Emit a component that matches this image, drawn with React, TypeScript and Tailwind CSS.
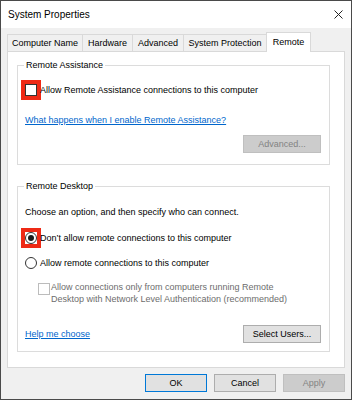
import React from "react";

const Check = ({ red, disabled }: { red?: boolean; disabled?: boolean }) => (
  <span
    className={
      "inline-block w-[12px] h-[12px] shrink-0 bg-white border " +
      (disabled ? "border-[#bcbcbc]" : "border-[#333333]") +
      (red ? " outline-4 outline-[#ee2a16]" : "")
    }
  />
);

const Radio = ({ red, checked }: { red?: boolean; checked?: boolean }) => (
  <span className={"inline-flex w-[12px] h-[12px] shrink-0" + (red ? " outline-4 outline-[#ee2a16]" : "")}>
    <span className="w-[12px] h-[12px] rounded-full border border-[#333333] bg-white flex items-center justify-center">
      {checked && <span className="w-[6px] h-[6px] rounded-full bg-[#1a1a1a]" />}
    </span>
  </span>
);

const Btn = ({ children, w, variant }: { children: React.ReactNode; w: string; variant?: "default" | "disabled" }) => (
  <div
    className={
      "h-[18px] flex items-center justify-center border text-[9px] leading-none " +
      w +
      (variant === "default"
        ? " border-[#0078d7] bg-[#e1e1e1] text-black"
        : variant === "disabled"
        ? " border-[#bfbfbf] bg-[#cccccc] text-[#838383]"
        : " border-[#adadad] bg-[#e1e1e1] text-black")
    }
  >
    {children}
  </div>
);

export default function App() {
  return (
    <div className="w-[352px] h-[400px] bg-[#f0f0f0] border border-[#4a4a4a] flex flex-col font-['Liberation_Sans',Arial,sans-serif] text-black text-[9px] leading-[12px]">
      {/* Title bar */}
      <div className="h-[27px] bg-white flex items-center justify-between pl-[7px] pr-[8px]">
        <span className="text-[10px]">System Properties</span>
        <svg width="9" height="9" viewBox="0 0 9 9" className="mr-[0px]">
          <path d="M0.5 0.5 L8.5 8.5 M8.5 0.5 L0.5 8.5" stroke="#222" strokeWidth="1" />
        </svg>
      </div>

      {/* Tabs */}
      <div className="flex items-end h-[19px] mt-[4px] ml-[6px] relative z-10">
        <div className="w-[76px] h-[17px] border border-b-0 border-[#d9d9d9] flex items-center justify-center">Computer Name</div>
        <div className="w-[51px] h-[17px] -ml-px border border-b-0 border-[#d9d9d9] flex items-center justify-center">Hardware</div>
        <div className="w-[52px] h-[17px] -ml-px border border-b-0 border-[#d9d9d9] flex items-center justify-center">Advanced</div>
        <div className="w-[84px] h-[17px] -ml-px border border-b-0 border-[#d9d9d9] flex items-center justify-center">System Protection</div>
        <div className="w-[45px] h-[20px] -ml-px -mb-px bg-white border border-b-0 border-[#d9d9d9] flex items-center justify-center pb-[1px]">Remote</div>
      </div>

      {/* Panel */}
      <div className="mx-[6px] h-[317px] bg-white border border-[#d9d9d9] pl-[9px] pr-[14px] pt-[13px] flex flex-col">
        {/* Remote Assistance */}
        <div className="relative h-[100px] border border-[#dcdcdc] pl-[7px] pr-[8px] flex flex-col">
          <span className="absolute -top-[7px] left-[6px] px-[2px] bg-white">Remote Assistance</span>
          <div className="mt-[17px] h-[14px] flex items-center">
            <Check red />
            <span className="ml-[3px]">Allow Remote Assistance connections to this computer</span>
          </div>
          <div className="mt-[16px] h-[14px] flex items-center">
            <span className="text-[#0066cc] underline">What happens when I enable Remote Assistance?</span>
          </div>
          <div className="mt-[8px] flex justify-end">
            <Btn w="w-[78px]" variant="disabled">Advanced...</Btn>
          </div>
        </div>

        {/* Remote Desktop */}
        <div className="relative mt-[21px] h-[166px] border border-[#dcdcdc] pl-[7px] pr-[8px] flex flex-col">
          <span className="absolute -top-[7px] left-[6px] px-[2px] bg-white">Remote Desktop</span>
          <div className="mt-[18px] h-[14px] flex items-center">Choose an option, and then specify who can connect.</div>
          <div className="mt-[12px] h-[14px] flex items-center">
            <Radio red checked />
            <span className="ml-[3px]">Don’t allow remote connections to this computer</span>
          </div>
          <div className="mt-[11px] h-[14px] flex items-center">
            <Radio />
            <span className="ml-[3px]">Allow remote connections to this computer</span>
          </div>
          <div className="mt-[11px] flex items-start pl-[13px] text-[#6d6d6d]">
            <span className="mt-[2px]">
              <Check disabled />
            </span>
            <span className="ml-[1px]">
              Allow connections only from computers running Remote
              <br />
              Desktop with Network Level Authentication (recommended)
            </span>
          </div>
          <div className="mt-[20px] flex items-center justify-between">
            <span className="text-[#0066cc] underline">Help me choose</span>
            <Btn w="w-[78px]">Select Users...</Btn>
          </div>
        </div>
      </div>

      {/* Buttons */}
      <div className="mt-[6px] mr-[6px] flex justify-end gap-[7px]">
        <Btn w="w-[62px]" variant="default">OK</Btn>
        <Btn w="w-[62px]">Cancel</Btn>
        <Btn w="w-[62px]" variant="disabled">Apply</Btn>
      </div>
    </div>
  );
}
